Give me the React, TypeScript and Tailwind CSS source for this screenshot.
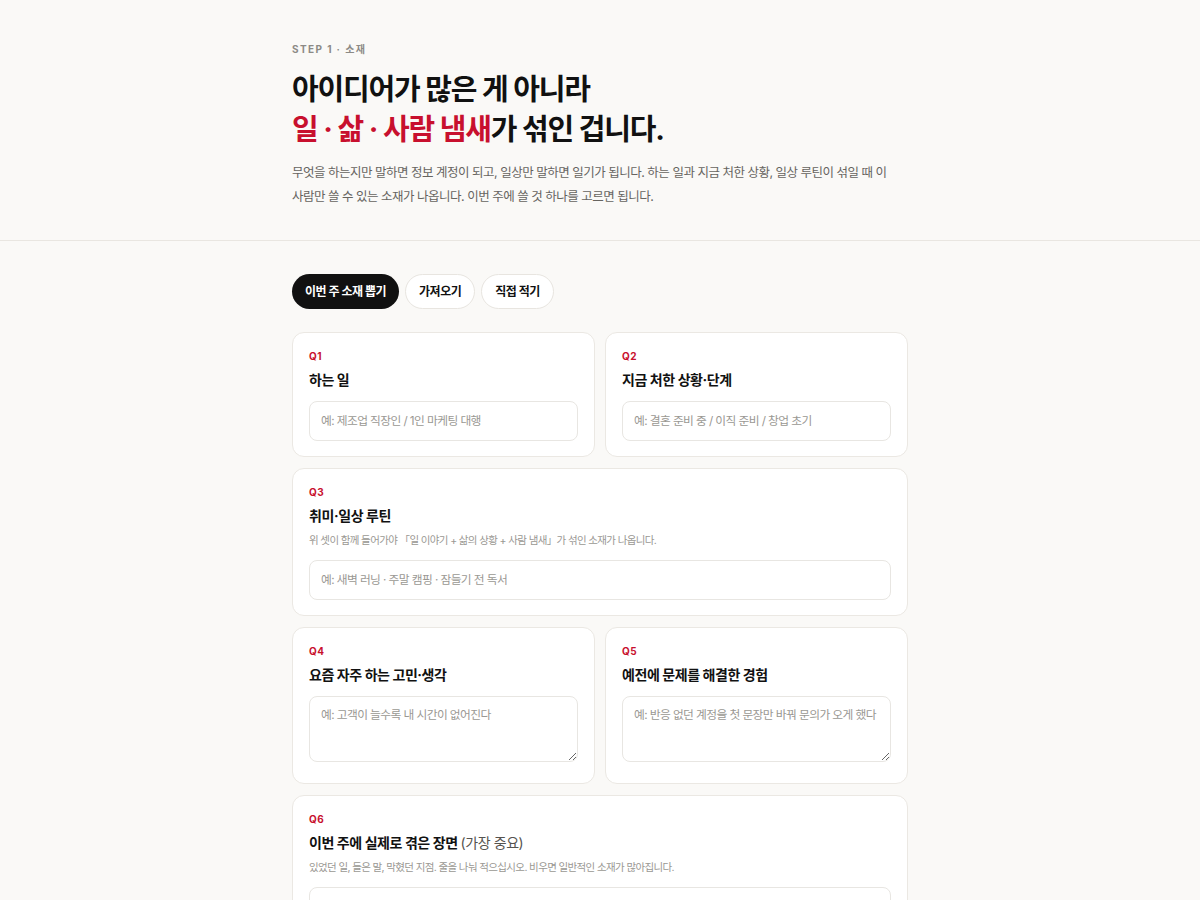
import React from 'react';

const FONT = { fontFamily: 'Inter, "Noto Sans CJK KR", "Noto Sans", sans-serif' };

interface CardProps {
  label: string;
  title: React.ReactNode;
  hint?: string;
  placeholder: string;
  multiline?: boolean;
  wide?: boolean;
}

function QuestionCard({ label, title, hint, placeholder, multiline, wide }: CardProps) {
  return (
    <div
      className={`rounded-xl border border-[#ebe8e3] bg-white px-4 pt-[17px] pb-[15px] ${wide ? 'col-span-2' : ''}`}
    >
      <div className="text-[10px] font-bold leading-[12px] tracking-[0.04em] text-[#c8102e]">{label}</div>
      <div className="mt-2 text-[14px] font-bold leading-5 tracking-[-0.03em] text-[#111]">{title}</div>
      {hint && (
        <div className="mt-[7px] break-keep text-[10.5px] leading-4 tracking-[-0.06em] text-[#9a9893]">{hint}</div>
      )}
      {multiline ? (
        <textarea
          placeholder={placeholder}
          className="mt-[11px] h-[66px] w-full rounded-lg border border-[#e8e6e2] bg-white px-[11px] py-2 text-[11.75px] leading-5 tracking-[-0.05em] text-[#222] placeholder:text-[#9a9893] outline-none"
        />
      ) : (
        <input
          type="text"
          placeholder={placeholder}
          className="mt-[11px] block h-10 w-full rounded-lg border border-[#e8e6e2] bg-white px-[11px] text-[11.75px] tracking-[-0.05em] text-[#222] placeholder:text-[#9a9893] outline-none"
        />
      )}
    </div>
  );
}

export default function App() {
  const [tab, setTab] = React.useState(0);
  const tabs = ['이번 주 소재 뽑기', '가져오기', '직접 적기'];

  return (
    <div className="min-h-screen bg-[#faf9f7]" style={FONT}>
      <header className="border-b border-[#e9e6e1]">
        <div className="mx-auto w-[616px] pt-[43px] pb-[31px]">
          <div className="text-[10px] font-bold leading-[12px] tracking-[0.14em] text-[#8c8a86]">STEP 1 · 소재</div>
          <h1 className="mt-[15px] text-[29px] font-bold leading-[40px] tracking-[-0.04em] text-[#111]">
            아이디어가 많은 게 아니라
            <br />
            <span className="text-[#c8102e]">일 · 삶 · 사람 냄새</span>가 섞인 겁니다.
          </h1>
          <p className="mt-[11px] break-keep text-[12.5px] leading-6 tracking-[-0.04em] text-[#66645f]">
            무엇을 하는지만 말하면 정보 계정이 되고, 일상만 말하면 일기가 됩니다. 하는 일과 지금 처한 상황, 일상 루틴이 섞일 때 이 사람만 쓸 수 있는 소재가 나옵니다. 이번 주에 쓸 것 하나를 고르면 됩니다.
          </p>
        </div>
      </header>

      <main className="mx-auto w-[616px] pt-[33px] pb-16">
        <div className="flex gap-1.5">
          {tabs.map((t, i) => (
            <button
              key={t}
              onClick={() => setTab(i)}
              className={`h-[35px] rounded-full px-[13px] text-[12px] font-bold tracking-[-0.04em] ${
                tab === i ? 'bg-[#111] text-white' : 'border border-[#e8e5e0] bg-white text-[#111]'
              }`}
            >
              {t}
            </button>
          ))}
        </div>

        <div className="mt-[23px] grid grid-cols-2 gap-x-2.5 gap-y-[11px]">
          <QuestionCard label="Q1" title="하는 일" placeholder="예: 제조업 직장인 / 1인 마케팅 대행" />
          <QuestionCard label="Q2" title="지금 처한 상황·단계" placeholder="예: 결혼 준비 중 / 이직 준비 / 창업 초기" />
          <QuestionCard
            wide
            label="Q3"
            title="취미·일상 루틴"
            hint="위 셋이 함께 들어가야 「일 이야기 + 삶의 상황 + 사람 냄새」가 섞인 소재가 나옵니다."
            placeholder="예: 새벽 러닝 · 주말 캠핑 · 잠들기 전 독서"
          />
          <QuestionCard multiline label="Q4" title="요즘 자주 하는 고민·생각" placeholder="예: 고객이 늘수록 내 시간이 없어진다" />
          <QuestionCard multiline label="Q5" title="예전에 문제를 해결한 경험" placeholder="예: 반응 없던 계정을 첫 문장만 바꿔 문의가 오게 했다" />
          <QuestionCard
            wide
            multiline
            label="Q6"
            title={
              <>
                이번 주에 실제로 겪은 장면 <span className="font-normal text-[#55534f]">(가장 중요)</span>
              </>
            }
            hint="있었던 일, 들은 말, 막혔던 지점. 줄을 나눠 적으십시오. 비우면 일반적인 소재가 많아집니다."
            placeholder="예: 미팅에서 '그래서 결론이 뭐예요?'라는 말을 들었다"
          />
        </div>
      </main>
    </div>
  );
}
